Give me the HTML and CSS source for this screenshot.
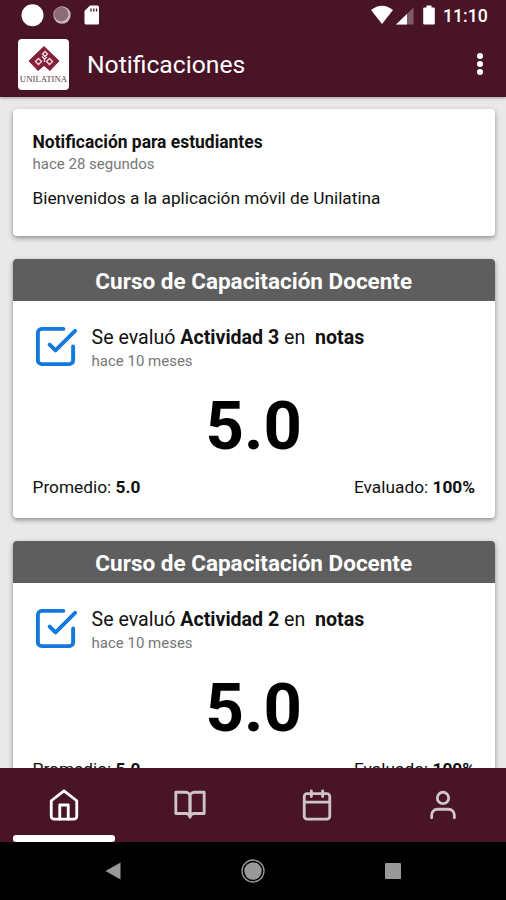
FILE: index.html
```html
<!DOCTYPE html>
<html lang="es">

<head>
    <meta charset="utf-8">
    <meta name="viewport" content="width=device-width, initial-scale=1.0">
    <title>Notificaciones</title>
    <link rel="stylesheet" href="styles.css">
</head>

<body>
    <header>
        <div class="status">
            <svg class="status-left" width="110" height="32" viewBox="0 0 110 32">
                <circle cx="32.5" cy="15.2" r="11" fill="#fff" />
                <circle cx="62" cy="15" r="8.7" fill="#c9b8c0" />
                <circle cx="61.2" cy="14.2" r="7.2" fill="#8d6a7a" />
                <path d="M90 5.500h7.500q1.500 0 1.500 1.500v16q0 1.500-1.500 1.500h-11.500q-1.500 0-1.500-1.500v-12z" fill="#fff" />
                <path d="M91 8.500v3M93.800 8.500v3M96.500 8.500v3" stroke="#481426" stroke-width="1.300" />
            </svg>
            <svg class="status-right" width="70" height="32" viewBox="0 0 70 32">
                <path d="M1 10Q12 1.500 23 10L12 24z" fill="#fff" />
                <path d="M43.500 7.500v17h-17.500z" fill="#7f5b69" />
                <path d="M37 14v10.500H26z" fill="#fff" />
                <path d="M56.500 5.500h5v2h2q1.300 0 1.300 1.300v14.400q0 1.300-1.300 1.300h-9q-1.300 0-1.300-1.300v-14.400q0-1.300 1.300-1.300h2z" fill="#fff" />
            </svg>
            <span class="clock">11:10</span>
        </div>
        <div class="toolbar">
            <div class="logo">
                <svg width="32" height="28" viewBox="0 0 32 28">
                    <path d="M16 1.500l15 14.500-9 9.500-6-5-6 5-9-9.500z" fill="#842039" stroke="#842039" stroke-linejoin="round" />
                    <g fill="#842039" stroke="#f0dbe1" stroke-width="1.400">
                        <path d="M17 6.500l2.500 2.500-2.500 2.500-2.500-2.500z" />
                        <path d="M10.500 13.500l3 3-3 3-3-3z" />
                        <path d="M21.500 13.500l3 3-3 3-3-3z" />
                        <path d="M14 11.500l2.500 2.500M19 12l-2.500 2M16.500 14v3" fill="none" />
                    </g>
                </svg>
                <span>UNILATINA</span>
            </div>
            <h1>Notificaciones</h1>
            <div class="more"><i></i><i></i><i></i></div>
        </div>
    </header>

    <main>
        <article class="card aviso">
            <h2>Notificación para estudiantes</h2>
            <p class="tiempo">hace 28 segundos</p>
            <p class="mensaje">Bienvenidos a la aplicación móvil de Unilatina</p>
        </article>

        <article class="card curso">
            <h2>Curso de Capacitación Docente</h2>
            <div class="actividad">
                <svg class="check" viewBox="0 0 24 24">
                    <polyline points="9 11 12 14 22 4" />
                    <path d="M21 12v7a2 2 0 0 1-2 2H5a2 2 0 0 1-2-2V5a2 2 0 0 1 2-2h11" />
                </svg>
                <div>
                    <p class="titulo">Se evaluó <b>Actividad 3</b> en &nbsp;<b>notas</b></p>
                    <p class="tiempo">hace 10 meses</p>
                </div>
            </div>
            <p class="nota">5.0</p>
            <div class="resumen">
                <span>Promedio: <b>5.0</b></span>
                <span>Evaluado: <b>100%</b></span>
            </div>
        </article>

        <article class="card curso">
            <h2>Curso de Capacitación Docente</h2>
            <div class="actividad">
                <svg class="check" viewBox="0 0 24 24">
                    <polyline points="9 11 12 14 22 4" />
                    <path d="M21 12v7a2 2 0 0 1-2 2H5a2 2 0 0 1-2-2V5a2 2 0 0 1 2-2h11" />
                </svg>
                <div>
                    <p class="titulo">Se evaluó <b>Actividad 2</b> en &nbsp;<b>notas</b></p>
                    <p class="tiempo">hace 10 meses</p>
                </div>
            </div>
            <p class="nota">5.0</p>
            <div class="resumen">
                <span>Promedio: <b>5.0</b></span>
                <span>Evaluado: <b>100%</b></span>
            </div>
        </article>
    </main>

    <nav class="tabs">
        <a class="valgt">
            <svg viewBox="0 0 24 24">
                <path d="M3 9l9-7 9 7v11a2 2 0 0 1-2 2H5a2 2 0 0 1-2-2z" />
                <path d="M9 22V12h6v10" />
            </svg>
        </a>
        <a>
            <svg viewBox="0 0 24 24">
                <path d="M2 3h7a3 3 0 0 1 3 3v14.500a3 3 0 0 0-3-2.500H2z" />
                <path d="M22 3h-7a3 3 0 0 0-3 3v14.500a3 3 0 0 1 3-2.500h7z" />
            </svg>
        </a>
        <a>
            <svg viewBox="0 0 24 24">
                <rect x="3" y="4" width="18" height="18" rx="2" />
                <path d="M16 2v4M8 2v4M3 10h18" />
            </svg>
        </a>
        <a>
            <svg viewBox="0 0 24 24">
                <path d="M20 21v-2a4 4 0 0 0-4-4H8a4 4 0 0 0-4 4v2" />
                <circle cx="12" cy="7" r="4" />
            </svg>
        </a>
    </nav>

    <footer>
        <svg width="16" height="18" viewBox="0 0 16 18"><path d="M15.500 .5v17L.5 9z" fill="#999" /></svg>
        <svg width="24" height="24" viewBox="0 0 24 24">
            <circle cx="12" cy="12" r="11" fill="none" stroke="#999" stroke-width="1.300" />
            <circle cx="12" cy="12" r="8.700" fill="#999" />
        </svg>
        <svg width="16" height="16" viewBox="0 0 16 16"><rect width="16" height="16" rx="1" fill="#999" /></svg>
    </footer>
</body>

</html>
```
FILE: styles.css
```css
* {
    box-sizing: border-box;
}

body {
    margin: 0;
    height: 900px;
    display: flex;
    flex-direction: column;
    overflow: hidden;
    background-color: #e9e9e9;
    font-family: Roboto, sans-serif;
    color: #111;
}

h1,
h2,
p {
    margin: 0;
}

b {
    font-weight: 700;
}

header {
    height: 97px;
    flex-shrink: 0;
    background-color: #481426;
    color: #fff;
    box-shadow: 0 1px 3px rgba(0, 0, 0, .35);
}

.status {
    display: flex;
    height: 32px;
}

.status-right {
    margin-left: auto;
}

.clock {
    width: 66px;
    padding-left: 3px;
    font-size: 17.7px;
    font-weight: 500;
    line-height: 32px;
}

.toolbar {
    display: flex;
    align-items: center;
    height: 65px;
    padding: 0 23px 1px 18px;
}

.logo {
    display: flex;
    flex-direction: column;
    align-items: center;
    width: 51px;
    height: 51px;
    padding-top: 6px;
    border-radius: 4px;
    background-color: #fff;
    overflow: hidden;
}

.logo svg {
    flex-shrink: 0;
}

.logo span {
    margin-top: 1px;
    font-family: "Liberation Serif", serif;
    font-size: 8.8px;
    line-height: 10px;
    color: #5d3a46;
}

h1 {
    margin-left: 18px;
    font-size: 24.7px;
    font-weight: 400;
}

.more {
    display: flex;
    flex-direction: column;
    gap: 2px;
    margin-left: auto;
}

.more i {
    width: 6px;
    height: 6px;
    border-radius: 50%;
    background-color: #fff;
}

main {
    flex: 1;
    min-height: 0;
    display: flex;
    flex-direction: column;
    gap: 23px;
    padding: 12px 11px 0 12.500px;
    overflow: hidden;
}

.card {
    flex-shrink: 0;
    border-radius: 4px;
    background-color: #fff;
    box-shadow: 0 2px 5px rgba(0, 0, 0, .4);
    overflow: hidden;
}

.aviso {
    height: 127px;
    padding: 22px 20px;
}

.aviso h2 {
    font-size: 17.45px;
    font-weight: 700;
    line-height: 22px;
}

.tiempo {
    font-size: 15px;
    line-height: 20px;
    color: #777;
}

.aviso .tiempo {
    padding-top: 1px;
}

.mensaje {
    margin-top: 13px;
    font-size: 17.25px;
    line-height: 22px;
}

.curso {
    height: 259px;
}

.curso h2 {
    height: 42px;
    background-color: #5e5e5e;
    color: #fff;
    font-size: 22.5px;
    font-weight: 700;
    line-height: 45px;
    text-align: center;
}

.actividad {
    display: flex;
    gap: 13px;
    padding: 22px 19px 0;
}

.check {
    width: 47px;
    height: 47px;
    fill: none;
    stroke: #1479dc;
    stroke-width: 2;
    stroke-linecap: round;
    stroke-linejoin: round;
}

.titulo {
    margin-top: 1px;
    font-size: 19.6px;
    line-height: 27px;
}

.nota {
    height: 76px;
    font-size: 67px;
    font-weight: 700;
    line-height: 111px;
    text-align: center;
    color: #000;
}

.resumen {
    display: flex;
    justify-content: space-between;
    padding: 29px 20px 0;
    font-size: 17.3px;
    line-height: 22px;
}

.tabs {
    display: grid;
    grid-template-columns: repeat(4, 1fr);
    flex-shrink: 0;
    height: 74px;
    padding-left: 1px;
    background-color: #481426;
}

.tabs a {
    display: flex;
    flex-direction: column;
    align-items: center;
    padding-top: 20px;
}

.tabs svg {
    width: 34px;
    height: 34px;
    fill: none;
    stroke: #cdc5c7;
    stroke-width: 2;
    stroke-linecap: round;
    stroke-linejoin: round;
}

.tabs .valgt svg {
    stroke: #fff;
}

.valgt::after {
    content: "";
    width: 102px;
    height: 7px;
    margin-top: 13px;
    border-radius: 3px;
    background-color: #fff;
}

footer {
    display: flex;
    align-items: center;
    justify-content: space-between;
    flex-shrink: 0;
    height: 58px;
    padding: 0 105px;
    background-color: #000;
}
```
